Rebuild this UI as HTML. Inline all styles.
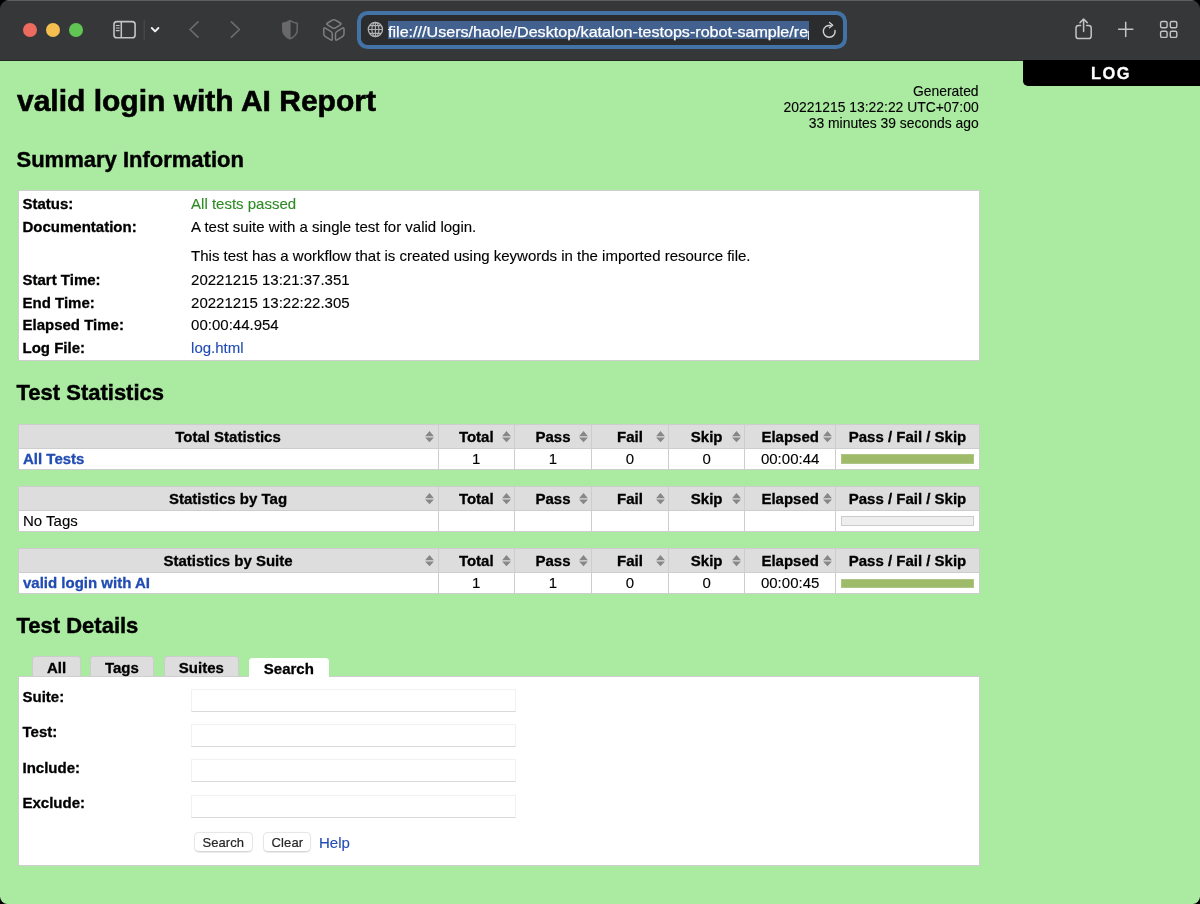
<!DOCTYPE html>
<html>
<head>
<meta charset="utf-8">
<title>valid login with AI Report</title>
<style>
html,body{margin:0;padding:0;}
body{width:1200px;height:904px;overflow:hidden;background:#000;font-family:"Liberation Sans",sans-serif;color:#000;position:relative;}
#win{will-change:transform;position:absolute;left:0;top:0;width:1200px;height:904px;border-radius:9px 9px 7.5px 7.5px;overflow:hidden;}
.t{position:absolute;white-space:nowrap;margin:0;padding:0;}
.r{position:absolute;margin:0;padding:0;}
.r svg,.ar{display:block;}
</style>
</head>
<body>
<div id="win">
<div class="r" style="left:0px;top:59px;width:1200px;height:845px;background:#abeba1;"></div>
<div class="r" style="left:0px;top:0px;width:1200px;height:60.5px;background:#363739;border-bottom:1px solid #232a23;box-sizing:border-box;box-shadow:inset 0 1px 0 #5e5f61;"></div>
<div class="r" style="left:23.05px;top:23.05px;width:13.9px;height:13.9px;background:#ec6a5e;border-radius:50%;"></div>
<div class="r" style="left:46.25px;top:23.05px;width:13.9px;height:13.9px;background:#f4bf4f;border-radius:50%;"></div>
<div class="r" style="left:69.25px;top:23.05px;width:13.9px;height:13.9px;background:#61c554;border-radius:50%;"></div>
<div class="r" style="left:356.5px;top:10.8px;width:490.4px;height:38.5px;background:#2b2c2e;border:4.2px solid #4372a6;border-radius:10.5px;box-sizing:border-box;"></div>
<div class="r" style="left:387.7px;top:20.9px;width:421px;height:18.5px;background:#42618e;"></div>
<div class="t" style="top:20.50px;font-size:15px;line-height:21px;color:#fff;left:388.2px;transform:scaleX(1.0745);transform-origin:0 50%;-webkit-text-stroke:0.25px #fff;">file:///Users/haole/Desktop/katalon-testops-robot-sample/re</div>
<div class="r" style="left:808.1px;top:30.5px;width:1.1px;height:9px;background:rgba(255,255,255,.8);"></div>
<svg class="r" style="left:0;top:0;" width="1200" height="60" viewBox="0 0 1200 60"><rect x="114" y="21.6" width="21.1" height="16.2" rx="2.9" fill="none" stroke="#c4c4c4" stroke-width="1.6"/><path d="M121.3 21.6 V37.8" stroke="#c4c4c4" stroke-width="1.5" fill="none"/><path d="M116.3 25.5 H119.2 M116.3 28 H119.2 M116.3 30.6 H119.2" stroke="#c4c4c4" stroke-width="1.2" fill="none" stroke-linecap="round"/><path d="M144.2 20.2 V39.7" stroke="#4d4e50" stroke-width="1.1"/><path d="M151.8 28 L155.1 31.4 L158.4 28" stroke="#f2f2f2" stroke-width="1.9" fill="none" stroke-linecap="round" stroke-linejoin="round"/><path d="M198 21.8 L190 29.5 L198 37.2" stroke="#6c6c6e" stroke-width="1.7" fill="none" stroke-linecap="round" stroke-linejoin="round"/><path d="M231.4 21.8 L239.4 29.5 L231.4 37.2" stroke="#6c6c6e" stroke-width="1.7" fill="none" stroke-linecap="round" stroke-linejoin="round"/><path d="M290 20.6 C287.6 22 285 22.9 282.8 23.2 V30 C282.8 34.2 285.8 37 290 38.9 C294.2 37 297.2 34.2 297.2 30 V23.2 C295 22.9 292.4 22 290 20.6 Z" fill="none" stroke="#69696b" stroke-width="1.5" stroke-linejoin="round"/><clipPath id="shl"><rect x="280" y="18" width="10.6" height="24"/></clipPath><path d="M290 20.6 C287.6 22 285 22.9 282.8 23.2 V30 C282.8 34.2 285.8 37 290 38.9 C294.2 37 297.2 34.2 297.2 30 V23.2 C295 22.9 292.4 22 290 20.6 Z" fill="#69696b" clip-path="url(#shl)"/><g fill="none" stroke="#7f7f81" stroke-width="1.5" stroke-linejoin="round"><path d="M332.34 20.21 Q333.90 19.30 335.46 20.21 L340.24 22.99 Q341.80 23.90 340.26 24.83 L335.44 27.77 Q333.90 28.70 332.36 27.77 L327.54 24.83 Q326.00 23.90 327.56 22.99 Z"/><path d="M323.80 29.00 Q323.80 27.20 325.35 28.11 L330.75 31.29 Q332.30 32.20 332.30 34.00 L332.30 39.00 Q332.30 40.80 330.76 39.86 L325.34 36.54 Q323.80 35.60 323.80 33.80 Z"/><path d="M344.00 29.00 Q344.00 27.20 342.45 28.11 L337.05 31.29 Q335.50 32.20 335.50 34.00 L335.50 39.00 Q335.50 40.80 337.04 39.86 L342.46 36.54 Q344.00 35.60 344.00 33.80 Z"/></g><g fill="none" stroke="#b2b2b2" stroke-width="1.1"><circle cx="375.4" cy="29.5" r="7.1" stroke-width="1.3"/><path d="M375.4 22.4 V36.6 M368.3 29.5 H382.5 M369.6 25.6 H381.2 M369.6 33.4 H381.2"/><ellipse cx="375.4" cy="29.5" rx="3.5" ry="7.1"/></g><g fill="none" stroke="#d2d2d2" stroke-width="1.45" stroke-linecap="round" stroke-linejoin="round"><path d="M835.05 30.5 A5.9 5.9 0 1 1 830.6 25.6"/><path d="M829.5 22.5 L832.7 25.3 L829.4 27.7" stroke-width="1.35"/></g><g fill="none" stroke="#c4c4c4" stroke-width="1.5" stroke-linecap="round" stroke-linejoin="round"><path d="M1080.6 25.4 H1078.6 A2.6 2.6 0 0 0 1076 28 V36 A2.6 2.6 0 0 0 1078.6 38.6 H1088.6 A2.6 2.6 0 0 0 1091.2 36 V28 A2.6 2.6 0 0 0 1088.6 25.4 H1086.6"/><path d="M1083.6 31.6 V19.2 M1080 22.6 L1083.6 19 L1087.2 22.6"/></g><path d="M1118.6 29.3 H1132.8 M1125.7 22.2 V36.4" stroke="#c4c4c4" stroke-width="1.5" stroke-linecap="round" fill="none"/><rect x="1160.6" y="21.5" width="6.5" height="6.2" rx="1.5" fill="none" stroke="#c4c4c4" stroke-width="1.4"/><rect x="1160.6" y="31.2" width="6.5" height="6.2" rx="1.5" fill="none" stroke="#c4c4c4" stroke-width="1.4"/><rect x="1170.3" y="21.5" width="6.5" height="6.2" rx="1.5" fill="none" stroke="#c4c4c4" stroke-width="1.4"/><rect x="1170.3" y="31.2" width="6.5" height="6.2" rx="1.5" fill="none" stroke="#c4c4c4" stroke-width="1.4"/></svg>
<div class="r" style="left:1022.5px;top:60.2px;width:178px;height:25.6px;background:#000;border-bottom-left-radius:5px;"></div>
<div class="t" style="top:61.57px;font-size:16.4px;line-height:23px;font-weight:bold;color:#fff;letter-spacing:1.5px;left:811.0999999999999px;width:600px;text-align:center;-webkit-text-stroke:0.3px #fff;">LOG</div>
<div class="t" style="top:79.60px;font-size:30px;line-height:42px;font-weight:bold;-webkit-text-stroke:0.60px #000;left:17px;">valid login with AI Report</div>
<div class="t" style="top:82.28px;font-size:13.9px;line-height:19px;-webkit-text-stroke:0.11px #000;right:221.39999999999998px;">Generated</div>
<div class="t" style="top:97.58px;font-size:13.9px;line-height:19px;-webkit-text-stroke:0.11px #000;right:221.39999999999998px;">20221215 13:22:22 UTC+07:00</div>
<div class="t" style="top:113.58px;font-size:13.9px;line-height:19px;-webkit-text-stroke:0.11px #000;right:221.39999999999998px;">33 minutes 39 seconds ago</div>
<div class="t" style="top:143.88px;font-size:22px;line-height:31px;font-weight:bold;-webkit-text-stroke:0.44px #000;left:16.5px;">Summary Information</div>
<div class="r" style="left:18px;top:190px;width:962px;height:171px;background:#fff;border:1px solid #cfcfcf;box-sizing:border-box;"></div>
<div class="t" style="top:193.30px;font-size:15px;line-height:21px;font-weight:bold;-webkit-text-stroke:0.30px #000;left:22.5px;">Status:</div>
<div class="t" style="top:193.30px;font-size:15px;line-height:21px;-webkit-text-stroke:0.12px #2d8a24;color:#2d8a24;left:191.1px;">All tests passed</div>
<div class="t" style="top:215.90px;font-size:15px;line-height:21px;font-weight:bold;-webkit-text-stroke:0.30px #000;left:22.5px;">Documentation:</div>
<div class="t" style="top:215.90px;font-size:15px;line-height:21px;-webkit-text-stroke:0.12px #000;left:191.1px;">A test suite with a single test for valid login.</div>
<div class="t" style="top:244.70px;font-size:15px;line-height:21px;-webkit-text-stroke:0.12px #000;left:191.1px;">This test has a workflow that is created using keywords in the imported resource file.</div>
<div class="t" style="top:268.90px;font-size:15px;line-height:21px;font-weight:bold;-webkit-text-stroke:0.30px #000;left:22.5px;">Start Time:</div>
<div class="t" style="top:268.90px;font-size:15px;line-height:21px;-webkit-text-stroke:0.12px #000;left:191.1px;">20221215 13:21:37.351</div>
<div class="t" style="top:291.60px;font-size:15px;line-height:21px;font-weight:bold;-webkit-text-stroke:0.30px #000;left:22.5px;">End Time:</div>
<div class="t" style="top:291.60px;font-size:15px;line-height:21px;-webkit-text-stroke:0.12px #000;left:191.1px;">20221215 13:22:22.305</div>
<div class="t" style="top:314.30px;font-size:15px;line-height:21px;font-weight:bold;-webkit-text-stroke:0.30px #000;left:22.5px;">Elapsed Time:</div>
<div class="t" style="top:314.30px;font-size:15px;line-height:21px;-webkit-text-stroke:0.12px #000;left:191.1px;">00:00:44.954</div>
<div class="t" style="top:337.00px;font-size:15px;line-height:21px;font-weight:bold;-webkit-text-stroke:0.30px #000;left:22.5px;">Log File:</div>
<div class="t" style="top:337.00px;font-size:15px;line-height:21px;-webkit-text-stroke:0.12px #214cb2;color:#214cb2;left:191.1px;">log.html</div>
<div class="t" style="top:377.38px;font-size:22px;line-height:31px;font-weight:bold;-webkit-text-stroke:0.44px #000;left:16.5px;">Test Statistics</div>
<div class="r" style="left:18px;top:424px;width:961.5px;height:24.5px;background:#dddddd;"></div>
<div class="r" style="left:18px;top:448.5px;width:961.5px;height:21px;background:#fff;"></div>
<div class="r" style="left:18px;top:424px;width:961.5px;height:45.5px;border:1px solid #cdcdcd;box-sizing:border-box;"></div>
<div class="r" style="left:18px;top:448.0px;width:961.5px;height:1px;background:#cdcdcd;"></div>
<div class="r" style="left:437.5px;top:424px;width:1px;height:45.5px;background:#cdcdcd;"></div>
<div class="r" style="left:514.0px;top:424px;width:1px;height:45.5px;background:#cdcdcd;"></div>
<div class="r" style="left:591.0px;top:424px;width:1px;height:45.5px;background:#cdcdcd;"></div>
<div class="r" style="left:668.0px;top:424px;width:1px;height:45.5px;background:#cdcdcd;"></div>
<div class="r" style="left:744.3px;top:424px;width:1px;height:45.5px;background:#cdcdcd;"></div>
<div class="r" style="left:835.0px;top:424px;width:1px;height:45.5px;background:#cdcdcd;"></div>
<div class="t" style="top:425.70px;font-size:15px;line-height:21px;font-weight:bold;-webkit-text-stroke:0.30px #000;left:-72.0px;width:600px;text-align:center;">Total Statistics</div>
<div class="t" style="top:425.70px;font-size:15px;line-height:21px;font-weight:bold;-webkit-text-stroke:0.30px #000;left:176.25px;width:600px;text-align:center;">Total</div>
<div class="t" style="top:425.70px;font-size:15px;line-height:21px;font-weight:bold;-webkit-text-stroke:0.30px #000;left:253.0px;width:600px;text-align:center;">Pass</div>
<div class="t" style="top:425.70px;font-size:15px;line-height:21px;font-weight:bold;-webkit-text-stroke:0.30px #000;left:330.0px;width:600px;text-align:center;">Fail</div>
<div class="t" style="top:425.70px;font-size:15px;line-height:21px;font-weight:bold;-webkit-text-stroke:0.30px #000;left:406.65px;width:600px;text-align:center;">Skip</div>
<div class="t" style="top:425.70px;font-size:15px;line-height:21px;font-weight:bold;-webkit-text-stroke:0.30px #000;left:490.15px;width:600px;text-align:center;">Elapsed</div>
<div class="t" style="top:425.70px;font-size:15px;line-height:21px;font-weight:bold;-webkit-text-stroke:0.30px #000;left:607.5px;width:600px;text-align:center;">Pass / Fail / Skip</div>
<div class="r" style="left:425.4px;top:430.6px;width:9px;height:12px;"><svg class="ar" viewBox="0 0 9 12" width="9" height="12"><path d="M4.5 0 L8.9 5.2 H0.1 Z M0.1 6.6 H8.9 L4.5 11.3 Z" fill="#878787"/></svg></div>
<div class="r" style="left:501.9px;top:430.6px;width:9px;height:12px;"><svg class="ar" viewBox="0 0 9 12" width="9" height="12"><path d="M4.5 0 L8.9 5.2 H0.1 Z M0.1 6.6 H8.9 L4.5 11.3 Z" fill="#878787"/></svg></div>
<div class="r" style="left:578.9px;top:430.6px;width:9px;height:12px;"><svg class="ar" viewBox="0 0 9 12" width="9" height="12"><path d="M4.5 0 L8.9 5.2 H0.1 Z M0.1 6.6 H8.9 L4.5 11.3 Z" fill="#878787"/></svg></div>
<div class="r" style="left:655.9px;top:430.6px;width:9px;height:12px;"><svg class="ar" viewBox="0 0 9 12" width="9" height="12"><path d="M4.5 0 L8.9 5.2 H0.1 Z M0.1 6.6 H8.9 L4.5 11.3 Z" fill="#878787"/></svg></div>
<div class="r" style="left:732.1999999999999px;top:430.6px;width:9px;height:12px;"><svg class="ar" viewBox="0 0 9 12" width="9" height="12"><path d="M4.5 0 L8.9 5.2 H0.1 Z M0.1 6.6 H8.9 L4.5 11.3 Z" fill="#878787"/></svg></div>
<div class="r" style="left:822.9px;top:430.6px;width:9px;height:12px;"><svg class="ar" viewBox="0 0 9 12" width="9" height="12"><path d="M4.5 0 L8.9 5.2 H0.1 Z M0.1 6.6 H8.9 L4.5 11.3 Z" fill="#878787"/></svg></div>
<div class="t" style="top:447.90px;font-size:15px;line-height:21px;font-weight:bold;-webkit-text-stroke:0.30px #214cb2;color:#214cb2;left:23px;">All Tests</div>
<div class="t" style="top:447.90px;font-size:15px;line-height:21px;-webkit-text-stroke:0.12px #000;left:176.25px;width:600px;text-align:center;">1</div>
<div class="t" style="top:447.90px;font-size:15px;line-height:21px;-webkit-text-stroke:0.12px #000;left:253.0px;width:600px;text-align:center;">1</div>
<div class="t" style="top:447.90px;font-size:15px;line-height:21px;-webkit-text-stroke:0.12px #000;left:330.0px;width:600px;text-align:center;">0</div>
<div class="t" style="top:447.90px;font-size:15px;line-height:21px;-webkit-text-stroke:0.12px #000;left:406.65px;width:600px;text-align:center;">0</div>
<div class="t" style="top:447.90px;font-size:15px;line-height:21px;-webkit-text-stroke:0.12px #000;left:490.15px;width:600px;text-align:center;">00:00:44</div>
<div class="r" style="left:841.3px;top:454.3px;width:133px;height:9.8px;background:#9dbb69;border:1px solid #afc588;box-sizing:border-box;"></div>
<div class="r" style="left:18px;top:486.2px;width:961.5px;height:24.5px;background:#dddddd;"></div>
<div class="r" style="left:18px;top:510.7px;width:961.5px;height:21px;background:#fff;"></div>
<div class="r" style="left:18px;top:486.2px;width:961.5px;height:45.5px;border:1px solid #cdcdcd;box-sizing:border-box;"></div>
<div class="r" style="left:18px;top:510.2px;width:961.5px;height:1px;background:#cdcdcd;"></div>
<div class="r" style="left:437.5px;top:486.2px;width:1px;height:45.5px;background:#cdcdcd;"></div>
<div class="r" style="left:514.0px;top:486.2px;width:1px;height:45.5px;background:#cdcdcd;"></div>
<div class="r" style="left:591.0px;top:486.2px;width:1px;height:45.5px;background:#cdcdcd;"></div>
<div class="r" style="left:668.0px;top:486.2px;width:1px;height:45.5px;background:#cdcdcd;"></div>
<div class="r" style="left:744.3px;top:486.2px;width:1px;height:45.5px;background:#cdcdcd;"></div>
<div class="r" style="left:835.0px;top:486.2px;width:1px;height:45.5px;background:#cdcdcd;"></div>
<div class="t" style="top:487.90px;font-size:15px;line-height:21px;font-weight:bold;-webkit-text-stroke:0.30px #000;left:-72.0px;width:600px;text-align:center;">Statistics by Tag</div>
<div class="t" style="top:487.90px;font-size:15px;line-height:21px;font-weight:bold;-webkit-text-stroke:0.30px #000;left:176.25px;width:600px;text-align:center;">Total</div>
<div class="t" style="top:487.90px;font-size:15px;line-height:21px;font-weight:bold;-webkit-text-stroke:0.30px #000;left:253.0px;width:600px;text-align:center;">Pass</div>
<div class="t" style="top:487.90px;font-size:15px;line-height:21px;font-weight:bold;-webkit-text-stroke:0.30px #000;left:330.0px;width:600px;text-align:center;">Fail</div>
<div class="t" style="top:487.90px;font-size:15px;line-height:21px;font-weight:bold;-webkit-text-stroke:0.30px #000;left:406.65px;width:600px;text-align:center;">Skip</div>
<div class="t" style="top:487.90px;font-size:15px;line-height:21px;font-weight:bold;-webkit-text-stroke:0.30px #000;left:490.15px;width:600px;text-align:center;">Elapsed</div>
<div class="t" style="top:487.90px;font-size:15px;line-height:21px;font-weight:bold;-webkit-text-stroke:0.30px #000;left:607.5px;width:600px;text-align:center;">Pass / Fail / Skip</div>
<div class="r" style="left:425.4px;top:492.8px;width:9px;height:12px;"><svg class="ar" viewBox="0 0 9 12" width="9" height="12"><path d="M4.5 0 L8.9 5.2 H0.1 Z M0.1 6.6 H8.9 L4.5 11.3 Z" fill="#878787"/></svg></div>
<div class="r" style="left:501.9px;top:492.8px;width:9px;height:12px;"><svg class="ar" viewBox="0 0 9 12" width="9" height="12"><path d="M4.5 0 L8.9 5.2 H0.1 Z M0.1 6.6 H8.9 L4.5 11.3 Z" fill="#878787"/></svg></div>
<div class="r" style="left:578.9px;top:492.8px;width:9px;height:12px;"><svg class="ar" viewBox="0 0 9 12" width="9" height="12"><path d="M4.5 0 L8.9 5.2 H0.1 Z M0.1 6.6 H8.9 L4.5 11.3 Z" fill="#878787"/></svg></div>
<div class="r" style="left:655.9px;top:492.8px;width:9px;height:12px;"><svg class="ar" viewBox="0 0 9 12" width="9" height="12"><path d="M4.5 0 L8.9 5.2 H0.1 Z M0.1 6.6 H8.9 L4.5 11.3 Z" fill="#878787"/></svg></div>
<div class="r" style="left:732.1999999999999px;top:492.8px;width:9px;height:12px;"><svg class="ar" viewBox="0 0 9 12" width="9" height="12"><path d="M4.5 0 L8.9 5.2 H0.1 Z M0.1 6.6 H8.9 L4.5 11.3 Z" fill="#878787"/></svg></div>
<div class="r" style="left:822.9px;top:492.8px;width:9px;height:12px;"><svg class="ar" viewBox="0 0 9 12" width="9" height="12"><path d="M4.5 0 L8.9 5.2 H0.1 Z M0.1 6.6 H8.9 L4.5 11.3 Z" fill="#878787"/></svg></div>
<div class="t" style="top:510.10px;font-size:15px;line-height:21px;-webkit-text-stroke:0.12px #000;left:23px;">No Tags</div>
<div class="r" style="left:841.3px;top:516.2px;width:133px;height:9.8px;background:#eeeeee;border:1px solid #cccccc;box-sizing:border-box;"></div>
<div class="r" style="left:18px;top:548.4px;width:961.5px;height:24.5px;background:#dddddd;"></div>
<div class="r" style="left:18px;top:572.9px;width:961.5px;height:21px;background:#fff;"></div>
<div class="r" style="left:18px;top:548.4px;width:961.5px;height:45.5px;border:1px solid #cdcdcd;box-sizing:border-box;"></div>
<div class="r" style="left:18px;top:572.4px;width:961.5px;height:1px;background:#cdcdcd;"></div>
<div class="r" style="left:437.5px;top:548.4px;width:1px;height:45.5px;background:#cdcdcd;"></div>
<div class="r" style="left:514.0px;top:548.4px;width:1px;height:45.5px;background:#cdcdcd;"></div>
<div class="r" style="left:591.0px;top:548.4px;width:1px;height:45.5px;background:#cdcdcd;"></div>
<div class="r" style="left:668.0px;top:548.4px;width:1px;height:45.5px;background:#cdcdcd;"></div>
<div class="r" style="left:744.3px;top:548.4px;width:1px;height:45.5px;background:#cdcdcd;"></div>
<div class="r" style="left:835.0px;top:548.4px;width:1px;height:45.5px;background:#cdcdcd;"></div>
<div class="t" style="top:550.10px;font-size:15px;line-height:21px;font-weight:bold;-webkit-text-stroke:0.30px #000;left:-72.0px;width:600px;text-align:center;">Statistics by Suite</div>
<div class="t" style="top:550.10px;font-size:15px;line-height:21px;font-weight:bold;-webkit-text-stroke:0.30px #000;left:176.25px;width:600px;text-align:center;">Total</div>
<div class="t" style="top:550.10px;font-size:15px;line-height:21px;font-weight:bold;-webkit-text-stroke:0.30px #000;left:253.0px;width:600px;text-align:center;">Pass</div>
<div class="t" style="top:550.10px;font-size:15px;line-height:21px;font-weight:bold;-webkit-text-stroke:0.30px #000;left:330.0px;width:600px;text-align:center;">Fail</div>
<div class="t" style="top:550.10px;font-size:15px;line-height:21px;font-weight:bold;-webkit-text-stroke:0.30px #000;left:406.65px;width:600px;text-align:center;">Skip</div>
<div class="t" style="top:550.10px;font-size:15px;line-height:21px;font-weight:bold;-webkit-text-stroke:0.30px #000;left:490.15px;width:600px;text-align:center;">Elapsed</div>
<div class="t" style="top:550.10px;font-size:15px;line-height:21px;font-weight:bold;-webkit-text-stroke:0.30px #000;left:607.5px;width:600px;text-align:center;">Pass / Fail / Skip</div>
<div class="r" style="left:425.4px;top:555.0px;width:9px;height:12px;"><svg class="ar" viewBox="0 0 9 12" width="9" height="12"><path d="M4.5 0 L8.9 5.2 H0.1 Z M0.1 6.6 H8.9 L4.5 11.3 Z" fill="#878787"/></svg></div>
<div class="r" style="left:501.9px;top:555.0px;width:9px;height:12px;"><svg class="ar" viewBox="0 0 9 12" width="9" height="12"><path d="M4.5 0 L8.9 5.2 H0.1 Z M0.1 6.6 H8.9 L4.5 11.3 Z" fill="#878787"/></svg></div>
<div class="r" style="left:578.9px;top:555.0px;width:9px;height:12px;"><svg class="ar" viewBox="0 0 9 12" width="9" height="12"><path d="M4.5 0 L8.9 5.2 H0.1 Z M0.1 6.6 H8.9 L4.5 11.3 Z" fill="#878787"/></svg></div>
<div class="r" style="left:655.9px;top:555.0px;width:9px;height:12px;"><svg class="ar" viewBox="0 0 9 12" width="9" height="12"><path d="M4.5 0 L8.9 5.2 H0.1 Z M0.1 6.6 H8.9 L4.5 11.3 Z" fill="#878787"/></svg></div>
<div class="r" style="left:732.1999999999999px;top:555.0px;width:9px;height:12px;"><svg class="ar" viewBox="0 0 9 12" width="9" height="12"><path d="M4.5 0 L8.9 5.2 H0.1 Z M0.1 6.6 H8.9 L4.5 11.3 Z" fill="#878787"/></svg></div>
<div class="r" style="left:822.9px;top:555.0px;width:9px;height:12px;"><svg class="ar" viewBox="0 0 9 12" width="9" height="12"><path d="M4.5 0 L8.9 5.2 H0.1 Z M0.1 6.6 H8.9 L4.5 11.3 Z" fill="#878787"/></svg></div>
<div class="t" style="top:572.30px;font-size:15px;line-height:21px;font-weight:bold;-webkit-text-stroke:0.30px #214cb2;color:#214cb2;left:23px;">valid login with AI</div>
<div class="t" style="top:572.30px;font-size:15px;line-height:21px;-webkit-text-stroke:0.12px #000;left:176.25px;width:600px;text-align:center;">1</div>
<div class="t" style="top:572.30px;font-size:15px;line-height:21px;-webkit-text-stroke:0.12px #000;left:253.0px;width:600px;text-align:center;">1</div>
<div class="t" style="top:572.30px;font-size:15px;line-height:21px;-webkit-text-stroke:0.12px #000;left:330.0px;width:600px;text-align:center;">0</div>
<div class="t" style="top:572.30px;font-size:15px;line-height:21px;-webkit-text-stroke:0.12px #000;left:406.65px;width:600px;text-align:center;">0</div>
<div class="t" style="top:572.30px;font-size:15px;line-height:21px;-webkit-text-stroke:0.12px #000;left:490.15px;width:600px;text-align:center;">00:00:45</div>
<div class="r" style="left:841.3px;top:578.6999999999999px;width:133px;height:9.8px;background:#9dbb69;border:1px solid #afc588;box-sizing:border-box;"></div>
<div class="t" style="top:610.38px;font-size:22px;line-height:31px;font-weight:bold;-webkit-text-stroke:0.44px #000;left:16.5px;">Test Details</div>
<div class="r" style="left:18px;top:676px;width:962px;height:190px;background:#fff;border:1px solid #cfcfcf;box-sizing:border-box;"></div>
<div class="r" style="left:32.3px;top:656.4px;width:49.0px;height:19.6px;background:#dddddd;border:1px solid #cccccc;border-bottom:0;border-radius:3.5px 3.5px 0 0;box-sizing:border-box;"></div>
<div class="t" style="top:656.80px;font-size:15px;line-height:21px;font-weight:bold;-webkit-text-stroke:0.30px #000;left:-243.5px;width:600px;text-align:center;">All</div>
<div class="r" style="left:90.4px;top:656.4px;width:63.599999999999994px;height:19.6px;background:#dddddd;border:1px solid #cccccc;border-bottom:0;border-radius:3.5px 3.5px 0 0;box-sizing:border-box;"></div>
<div class="t" style="top:656.80px;font-size:15px;line-height:21px;font-weight:bold;-webkit-text-stroke:0.30px #000;left:-178.1px;width:600px;text-align:center;">Tags</div>
<div class="r" style="left:164px;top:656.4px;width:75.30000000000001px;height:19.6px;background:#dddddd;border:1px solid #cccccc;border-bottom:0;border-radius:3.5px 3.5px 0 0;box-sizing:border-box;"></div>
<div class="t" style="top:656.80px;font-size:15px;line-height:21px;font-weight:bold;-webkit-text-stroke:0.30px #000;left:-98.65px;width:600px;text-align:center;">Suites</div>
<div class="r" style="left:248.7px;top:658.3px;width:80.3px;height:20px;background:#fff;border-radius:3.5px 3.5px 0 0;"></div>
<div class="t" style="top:657.60px;font-size:15px;line-height:21px;font-weight:bold;-webkit-text-stroke:0.30px #000;left:-11.149999999999977px;width:600px;text-align:center;">Search</div>
<div class="t" style="top:685.50px;font-size:15px;line-height:21px;font-weight:bold;-webkit-text-stroke:0.30px #000;left:22.5px;">Suite:</div>
<div class="r" style="left:191.3px;top:688.9px;width:325px;height:23.3px;background:#fff;border:1px solid #f1f1f1;border-bottom:1.3px solid #d9d9d9;box-sizing:border-box;"></div>
<div class="t" style="top:721.30px;font-size:15px;line-height:21px;font-weight:bold;-webkit-text-stroke:0.30px #000;left:22.5px;">Test:</div>
<div class="r" style="left:191.3px;top:724.0px;width:325px;height:23.3px;background:#fff;border:1px solid #f1f1f1;border-bottom:1.3px solid #d9d9d9;box-sizing:border-box;"></div>
<div class="t" style="top:756.50px;font-size:15px;line-height:21px;font-weight:bold;-webkit-text-stroke:0.30px #000;left:22.5px;">Include:</div>
<div class="r" style="left:191.3px;top:759.1999999999999px;width:325px;height:23.3px;background:#fff;border:1px solid #f1f1f1;border-bottom:1.3px solid #d9d9d9;box-sizing:border-box;"></div>
<div class="t" style="top:791.90px;font-size:15px;line-height:21px;font-weight:bold;-webkit-text-stroke:0.30px #000;left:22.5px;">Exclude:</div>
<div class="r" style="left:191.3px;top:794.6px;width:325px;height:23.3px;background:#fff;border:1px solid #f1f1f1;border-bottom:1.3px solid #d9d9d9;box-sizing:border-box;"></div>
<div class="r" style="left:194px;top:832.3px;width:58.599999999999994px;height:19.4px;background:#fff;border:1px solid #e6e6e6;border-bottom-color:#d6d6d6;border-radius:5px;box-sizing:border-box;box-shadow:0 0.5px 1px rgba(0,0,0,.08);"></div>
<div class="t" style="top:833.80px;font-size:13px;line-height:18px;color:#262626;letter-spacing:0.1px;left:-76.69999999999999px;width:600px;text-align:center;-webkit-text-stroke:0.2px #262626;">Search</div>
<div class="r" style="left:263.4px;top:832.3px;width:48.0px;height:19.4px;background:#fff;border:1px solid #e6e6e6;border-bottom-color:#d6d6d6;border-radius:5px;box-sizing:border-box;box-shadow:0 0.5px 1px rgba(0,0,0,.08);"></div>
<div class="t" style="top:833.80px;font-size:13px;line-height:18px;color:#262626;letter-spacing:0.1px;left:-12.600000000000023px;width:600px;text-align:center;-webkit-text-stroke:0.2px #262626;">Clear</div>
<div class="t" style="top:831.70px;font-size:15px;line-height:21px;-webkit-text-stroke:0.12px #214cb2;color:#214cb2;left:319px;">Help</div>
</div>
</body>
</html>
